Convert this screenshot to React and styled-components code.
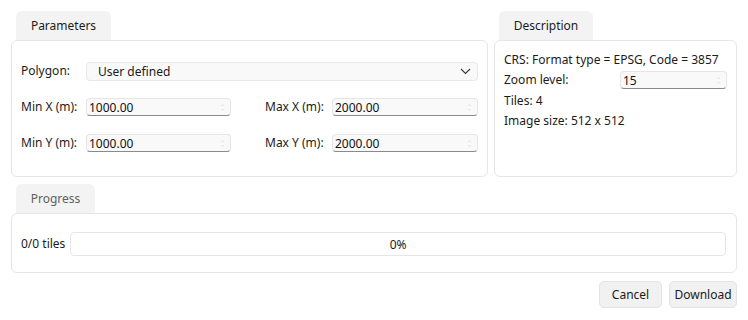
import React from 'react'
import styled, { createGlobalStyle } from 'styled-components'

const Global = createGlobalStyle`
  html, body {
    margin: 0;
    background: #ffffff;
  }
  body {
    font-family: "Noto Sans", "Segoe UI", Arial, sans-serif;
    font-size: 12px;
    color: #1b1b1b;
  }
`

const Window = styled.div`
  width: 748px;
  height: 320px;
  box-sizing: border-box;
  padding: 11px 11px 0 11px;
  display: flex;
  flex-direction: column;
`

const TopRow = styled.div`
  display: flex;
  gap: 6px;
`

const Group = styled.div`
  display: flex;
  flex-direction: column;
  width: ${p => p.width ? p.width + 'px' : 'auto'};
  flex: ${p => p.width ? 'none' : '1 1 auto'};
`

const Tab = styled.div`
  margin-left: 5px;
  width: ${p => p.width}px;
  height: 29px;
  box-sizing: border-box;
  background: #f3f3f3;
  border-radius: 6px 6px 0 0;
  display: flex;
  align-items: center;
  justify-content: center;
  color: ${p => p.dim ? '#5f5f5f' : '#1b1b1b'};
`

const Panel = styled.div`
  box-sizing: border-box;
  height: ${p => p.height}px;
  border: 1px solid #e6e6e6;
  border-radius: 6px;
  background: #fff;
`

const ParamGrid = styled.div`
  display: grid;
  grid-template-columns: 65px 145px 1fr 67px 146px;
  grid-auto-rows: 18px;
  row-gap: 18px;
  align-items: center;
  padding: 21px 9px 0 9px;
`

const Label = styled.span`
  white-space: nowrap;
  line-height: 18px;
`

const Combo = styled.div`
  grid-column: 2 / 6;
  height: 19px;
  box-sizing: border-box;
  background: #f9f9f9;
  border: 1px solid #e8e8e8;
  border-radius: 4px;
  display: flex;
  align-items: center;
  padding: 0 6px 0 11px;
  justify-content: space-between;
`

const Spin = styled.div`
  height: 18px;
  box-sizing: border-box;
  background: #f9f9f9;
  border: 1px solid #e6e6e6;
  border-bottom: 1px solid #8a8a8a;
  border-radius: 4px;
  display: flex;
  align-items: center;
  justify-content: space-between;
  padding: 0 5px 0 2px;
  color: #111;
`

const Arrows = () => (
  <svg width="5" height="9" viewBox="0 0 5 9">
    <path d="M1 3 L2.5 1.5 L4 3 M1 6 L2.5 7.5 L4 6" fill="none" stroke="#dcdcdc" strokeWidth="0.8" />
  </svg>
)

const Chevron = () => (
  <svg width="11" height="7" viewBox="0 0 11 7">
    <path d="M1 1 L5.5 5.5 L10 1" fill="none" stroke="#3a3a3a" strokeWidth="1.1" />
  </svg>
)

const DescBody = styled.div`
  padding: 8px 9px 0 9px;
  display: flex;
  flex-direction: column;
`

const Line = styled.div`
  height: 20px;
  display: flex;
  align-items: center;
  white-space: nowrap;
`

const ZoomRow = styled.div`
  display: grid;
  grid-template-columns: 116px 1fr;
  align-items: center;
  height: 22px;
  margin-bottom: -1px;
`

const ProgressBody = styled.div`
  display: flex;
  align-items: center;
  gap: 5px;
  padding: 18px 10px 0 9px;
`

const Bar = styled.div`
  flex: 1;
  height: 24px;
  box-sizing: border-box;
  border: 1px solid #e6e6e6;
  border-radius: 4px;
  background: #fff;
  display: flex;
  align-items: center;
  justify-content: center;
`

const Gap = styled.div`
  height: 7px;
  flex: none;
`

const Buttons = styled.div`
  display: flex;
  justify-content: flex-end;
  gap: 7px;
  margin-top: 8px;
`

const Button = styled.button`
  font: inherit;
  color: #1b1b1b;
  width: ${p => p.width}px;
  height: 27px;
  background: #f1f1f1;
  border: 1px solid #e3e3e3;
  border-radius: 5px;
  padding: 0;
`

export default function App() {
  return (
    <>
      <Global />
      <Window>
        <TopRow>
          <Group width={477}>
            <Tab width={95}>Parameters</Tab>
            <Panel height={137}>
              <ParamGrid>
                <Label>Polygon:</Label>
                <Combo>
                  <span>User defined</span>
                  <Chevron />
                </Combo>
                <Label>Min X (m):</Label>
                <Spin>1000.00<Arrows /></Spin>
                <span />
                <Label>Max X (m):</Label>
                <Spin>2000.00<Arrows /></Spin>
                <Label>Min Y (m):</Label>
                <Spin>1000.00<Arrows /></Spin>
                <span />
                <Label>Max Y (m):</Label>
                <Spin>2000.00<Arrows /></Spin>
              </ParamGrid>
            </Panel>
          </Group>
          <Group>
            <Tab width={94}>Description</Tab>
            <Panel height={137}>
              <DescBody>
                <Line>CRS: Format type = EPSG, Code = 3857</Line>
                <ZoomRow>
                  <Label>Zoom level:</Label>
                  <Spin>15<Arrows /></Spin>
                </ZoomRow>
                <Line>Tiles: 4</Line>
                <Line>Image size: 512 x 512</Line>
              </DescBody>
            </Panel>
          </Group>
        </TopRow>
        <Gap />
        <Group width={726}>
          <Tab width={79} dim>Progress</Tab>
          <Panel height={60}>
            <ProgressBody>
              <Label>0/0 tiles</Label>
              <Bar>0%</Bar>
            </ProgressBody>
          </Panel>
        </Group>
        <Buttons>
          <Button width={63}>Cancel</Button>
          <Button width={68}>Download</Button>
        </Buttons>
      </Window>
    </>
  )
}
